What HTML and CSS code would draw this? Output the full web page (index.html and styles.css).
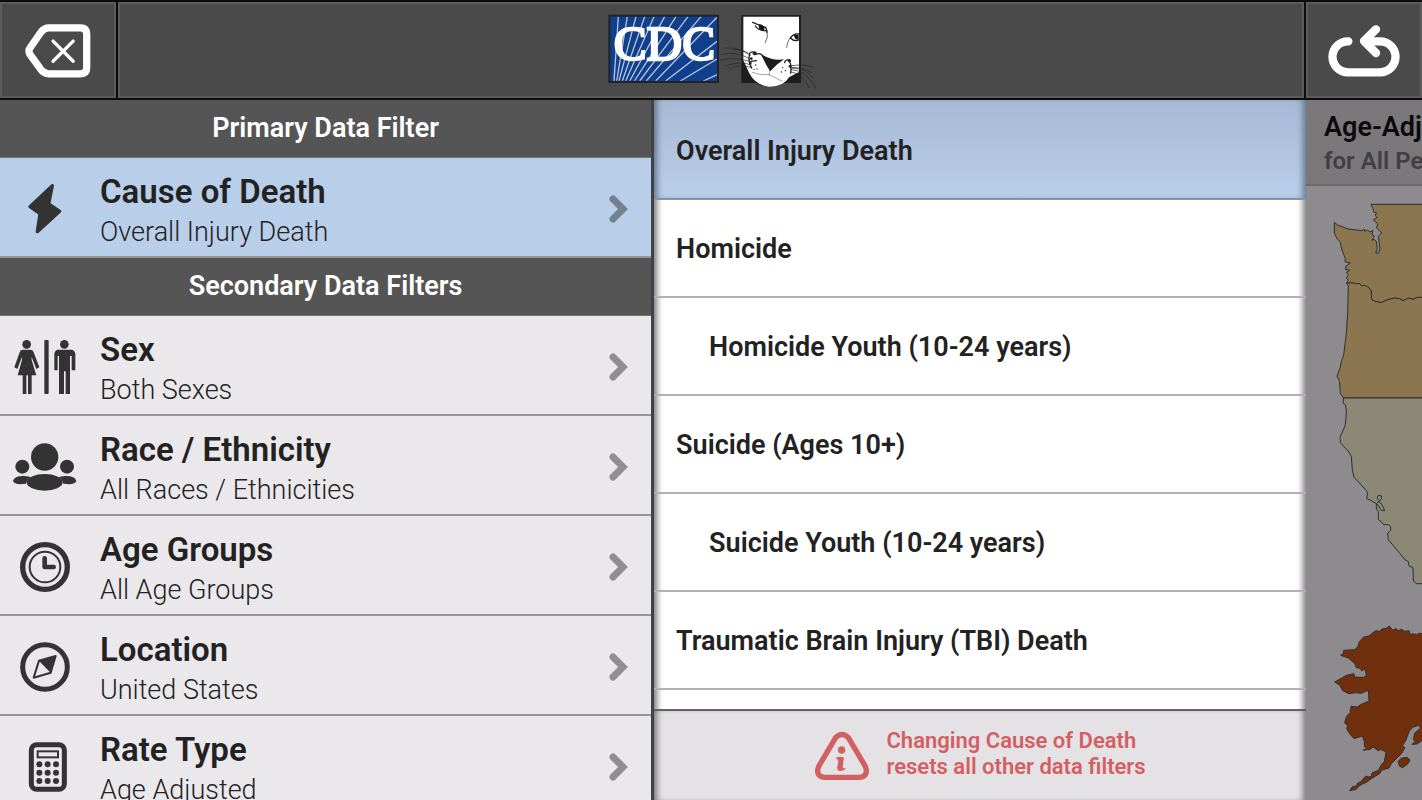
FILE: index.html
```
<!DOCTYPE html>
<html lang="en">
<head>
    <meta charset="UTF-8">
    <meta name="viewport" content="width=device-width, initial-scale=1.0">
    <title>Injury Data - Filters</title>
    <link rel="stylesheet" href="styles.css">
</head>
<body>
    <header class="top-bar">
        <button class="bar-btn" type="button" aria-label="Close filters">
            <svg class="icon-close" viewBox="72 69 200 168" fill="none" stroke="#fff" stroke-linecap="round" stroke-linejoin="round">
                <path d="M144 83H240Q259 83 259 102V203Q259 222 240 222H144Q130 222 120 209L87 163Q81 153 87 144L120 96Q130 83 144 83Z" stroke-width="22"/>
                <path d="M157 123L218 184M218 123L157 184" stroke-width="10"/>
            </svg>
        </button>
        <div class="bar-center">
            <svg class="logos" viewBox="36 39 636 228">
                <clipPath id="cdcBox"><rect x="47" y="50" width="319" height="192"/></clipPath>
                <rect x="40" y="44" width="332" height="205" fill="#222327"/>
                <rect x="46" y="50" width="320" height="193" fill="#103f8c"/>
                <g clip-path="url(#cdcBox)" stroke="#b4c2dc" stroke-width="4">
                    <path d="M57 243L70 50M65 243L97 50M72 243L123 50M82 243L149 50M92 243L177 50M104 243L209 50M118 243L243 50M134 243L279 50M154 243L318 50M182 243L366 52M212 243L366 124M256 243L366 177M325 243L366 224"/>
                </g>
                <text class="cdc-text" x="56" y="180">CDC</text>
                <!-- cougar -->
                <rect x="439" y="45" width="179" height="204" fill="#1e1e1f"/>
                <path d="M445 50H612V216L582 232Q567 260 523 260Q482 255 464 222L445 181Z" fill="#fff"/>
                <path d="M463 222Q470 246 500 257" fill="none" stroke="#222" stroke-width="3"/>
                <g fill="none" stroke="#202020" stroke-linecap="round">
                    <path d="M473 67Q496 77 512 82Q516 91 516 97M481 78Q490 92 513 92" stroke-width="4"/>
                    <path d="M516 95Q521 111 511 128M575 142Q578 120 588 111" stroke-width="2"/>
                    <path d="M611 102Q597 99 586 114Q598 126 611 120" stroke-width="4"/>
                    <path d="M464 160Q458 187 470 204M464 160Q473 150 482 163Q493 158 500 164L526 208M468 184L484 182M582 180Q590 193 587 219M569 188Q572 175 583 182" stroke-width="4"/>
                    <path d="M471 217Q496 227 523 224L562 244M523 211V226" stroke="#777" stroke-width="2"/>
                </g>
                <path d="M493 73Q500 72 509 82Q509 91 503 93Q493 91 491 81ZM597 104H611V119Q598 121 597 104Z" fill="#151515"/>
                <path d="M500 164Q535 184 567 178L547 193Q534 205 526 214Q513 197 500 164Z" fill="#1c1c1c"/>
                <g fill="#222">
                    <circle cx="479" cy="160" r="6"/><circle cx="583" cy="182" r="5"/>
                    <circle cx="469" cy="176" r="4"/><circle cx="466" cy="189" r="4"/>
                    <circle cx="482" cy="195" r="2"/><circle cx="486" cy="207" r="2"/><circle cx="477" cy="208" r="2"/>
                    <circle cx="563" cy="203" r="2"/><circle cx="571" cy="212" r="2"/><circle cx="559" cy="216" r="2"/><circle cx="585" cy="199" r="4"/>
                </g>
                <g fill="none" stroke="#242424" stroke-width="2">
                    <path d="M468 166Q427 141 390 144M465 177Q421 151 378 164M467 185Q422 169 376 181M470 195Q431 181 391 199M468 202Q431 192 402 207M460 160Q433 144 414 149"/>
                    <path d="M588 197Q623 190 655 201M589 205Q630 203 657 237M587 209Q636 210 664 268M588 216Q622 220 643 264M585 202Q625 201 650 219"/>
                </g>
            </svg>
        </div>
        <button class="bar-btn" type="button" aria-label="Reset filters">
            <svg class="icon-reset" viewBox="108 72 228 162" fill="none" stroke="#fff" stroke-width="25" stroke-linecap="round" stroke-linejoin="round">
                <path d="M175 124H174A46 46 0 0 0 174 217H270A46 46 0 0 0 270 124H228"/>
                <path d="M258 88L222 123L258 159"/>
            </svg>
        </button>
    </header>

    <main class="content">
        <nav class="filters">
            <h2>Primary Data Filter</h2>
            <button class="filter-row selected" type="button">
                <span class="row-icon">
                    <svg width="36" height="54" viewBox="80 98 108 158" fill="#333" stroke="#333" stroke-width="10" stroke-linejoin="round">
                        <path d="M156 107L89 170L119 191L111 245L178 184L145 162Z"/>
                    </svg>
                </span>
                <span class="row-text"><strong>Cause of Death</strong><span>Overall Injury Death</span></span>
                <svg class="chevron" viewBox="0 0 20 28"><path d="M4 4L14 14L4 24"/></svg>
            </button>
            <h2>Secondary Data Filters</h2>
            <button class="filter-row" type="button">
                <span class="row-icon">
                    <svg width="62" height="56" viewBox="40 56 186 168" fill="#333">
                        <circle cx="78" cy="72" r="13"/>
                        <path d="M65 88H91Q97 89 99 96L116 141L107 146L93 110V119L107 165H93V221H82V165H77V221H66V165H51L64 119V110L50 146L41 141L57 96Q59 89 65 88Z"/>
                        <rect x="131" y="59" width="13" height="162" rx="3"/>
                        <circle cx="191" cy="72" r="13"/>
                        <path d="M171 88H213Q223 90 224 101V150H213V107H208V221H195V153H190V221H175V107H171V150H161V101Q162 90 171 88Z"/>
                    </svg>
                </span>
                <span class="row-text"><strong>Sex</strong><span>Both Sexes</span></span>
                <svg class="chevron" viewBox="0 0 20 28"><path d="M4 4L14 14L4 24"/></svg>
            </button>
            <button class="filter-row" type="button">
                <span class="row-icon">
                    <svg width="66" height="50" viewBox="35 369 198 150" fill="#333">
                        <circle cx="133" cy="414" r="41"/>
                        <circle cx="66" cy="443" r="21"/><circle cx="200" cy="443" r="21"/>
                        <path d="M38 486Q42 470 72 471Q85 472 92 475Q80 480 77 494Q42 499 38 486ZM228 486Q224 470 194 471Q181 472 174 475Q186 480 189 494Q224 499 228 486Z"/>
                        <ellipse cx="133" cy="490" rx="54" ry="25"/>
                    </svg>
                </span>
                <span class="row-text"><strong>Race / Ethnicity</strong><span>All Races / Ethnicities</span></span>
                <svg class="chevron" viewBox="0 0 20 28"><path d="M4 4L14 14L4 24"/></svg>
            </button>
            <button class="filter-row" type="button">
                <span class="row-icon">
                    <svg width="52" height="52" viewBox="56 70 156 156" fill="none" stroke="#333">
                        <circle cx="134" cy="148" r="67" stroke-width="16"/>
                        <circle cx="134" cy="148" r="46" stroke-width="6"/>
                        <path d="M133 122V148H160" stroke-width="14" stroke-linecap="round" stroke-linejoin="round"/>
                    </svg>
                </span>
                <span class="row-text"><strong>Age Groups</strong><span>All Age Groups</span></span>
                <svg class="chevron" viewBox="0 0 20 28"><path d="M4 4L14 14L4 24"/></svg>
            </button>
            <button class="filter-row" type="button">
                <span class="row-icon">
                    <svg width="52" height="52" viewBox="56 362 156 156" fill="none" stroke="#333">
                        <circle cx="134" cy="440" r="67" stroke-width="15"/>
                        <path d="M166 407L116 421L100 472L151 457Z" stroke-width="6" stroke-linejoin="round"/>
                        <path d="M166 407L116 421L151 457Z" fill="#333"/>
                    </svg>
                </span>
                <span class="row-text"><strong>Location</strong><span>United States</span></span>
                <svg class="chevron" viewBox="0 0 20 28"><path d="M4 4L14 14L4 24"/></svg>
            </button>
            <button class="filter-row" type="button">
                <span class="row-icon icon-calc">
                    <svg width="40" height="52" viewBox="82 662 120 156" fill="#333">
                        <rect x="92" y="673" width="99" height="134" rx="16" fill="none" stroke="#333" stroke-width="15"/>
                        <rect x="111" y="693" width="61" height="18" fill="none" stroke="#333" stroke-width="6"/>
                        <circle cx="116" cy="732" r="9"/><circle cx="141" cy="732" r="9"/><circle cx="166" cy="732" r="9"/>
                        <circle cx="116" cy="757" r="9"/><circle cx="141" cy="757" r="9"/><circle cx="166" cy="757" r="9"/>
                        <circle cx="116" cy="782" r="9"/><circle cx="141" cy="782" r="9"/><circle cx="166" cy="782" r="9"/>
                    </svg>
                </span>
                <span class="row-text"><strong>Rate Type</strong><span>Age Adjusted</span></span>
                <svg class="chevron" viewBox="0 0 20 28"><path d="M4 4L14 14L4 24"/></svg>
            </button>
        </nav>

        <section class="options">
            <div class="option-list">
                <button class="option selected" type="button">Overall Injury Death</button>
                <button class="option" type="button">Homicide</button>
                <button class="option sub" type="button">Homicide Youth (10-24 years)</button>
                <button class="option" type="button">Suicide (Ages 10+)</button>
                <button class="option sub" type="button">Suicide Youth (10-24 years)</button>
                <button class="option" type="button">Traumatic Brain Injury (TBI) Death</button>
            </div>
            <div class="notice">
                <svg width="56" height="50" viewBox="72 153 168 150" fill="none" stroke="#d45f62">
                    <path d="M137 173Q156 154 175 173L226 259Q237 288 209 292H103Q75 288 86 259Z" stroke-width="16" stroke-linejoin="round"/>
                    <circle cx="155" cy="210" r="11" fill="#d45f62" stroke="none"/>
                    <path d="M136 234Q151 227 162 233L158 260Q158 267 169 265Q161 275 148 273Q140 271 142 260L145 244Q145 237 136 234Z" fill="#d45f62" stroke="none"/>
                </svg>
                <p>Changing Cause of Death<br>resets all other data filters</p>
            </div>
        </section>

        <aside class="map-panel">
            <div class="map-title">
                <h3>Age-Adjusted Death Rates</h3>
                <p>for All Persons, All Ages</p>
            </div>
            <svg class="map" viewBox="30 18 348 1842" preserveAspectRatio="xMinYMin slice" stroke="#303030" stroke-width="3" stroke-linejoin="round">
                <!-- Washington -->
                <path fill="#8c7650" d="M400 73H225L231 86L234 97L241 98L238 108L244 112L232 120L245 131L242 144L257 159L247 169L252 208L247 220L239 218L244 207L241 184L234 178L228 181L235 168L228 163L231 151L222 156L214 150L206 154L204 147L198 152L156 147L125 135L115 127V159L122 174L133 187L137 207L148 236L147 245L163 249L150 258L148 268L161 271L152 276L157 284L151 294L157 300L152 309L174 309L180 312L190 310L196 318L206 316L218 322L225 332L227 359L237 364L256 368L275 359L296 354L311 356L321 362L338 354L351 358L365 352L400 353Z"/>
                <!-- Oregon -->
                <path fill="#8c7650" d="M152 309L174 309L180 312L190 310L196 318L206 316L218 322L225 332L227 359L237 364L256 368L275 359L296 354L311 356L321 362L338 354L351 358L365 352L400 353V654H143L133 641L131 605L123 589L132 565L137 541L143 525L151 460L155 400L157 318Z"/>
                <!-- California -->
                <path fill="#8b8975" d="M143 654H400V1211H362L352 1203L351 1163L339 1158L337 1145L328 1140L277 1079L275 1059L284 1051V1040L277 1034H264L247 1018V994L241 987V971L224 961L212 956L215 940L211 931L174 892L169 870L166 829L157 814L133 788L132 772L147 738L150 715L151 692L148 674L141 669Z"/>
                <path fill="#8d8b8d" d="M242 970L250 962L243 956L247 946L257 948L255 959L248 965L258 974L266 992L256 991L248 978Z"/>
                <!-- Alaska -->
                <g fill="#702f0d" transform="translate(0 1260)">
                    <path d="M400 102L368 100L362 104L349 101L343 104L339 92L325 94L317 88L307 92L301 86L289 90L280 78L271 85L258 87L252 94L240 92L231 98L219 108L203 111L190 125L186 139L176 149L143 151L142 161L134 166L157 174L176 190L180 202L194 206L197 213L207 207L211 227L203 232H187L175 231L174 221L151 226L132 237L116 246L131 255L140 272L159 281L180 278L196 280L217 271L219 303L194 314L184 321L165 319L162 338L151 350L146 369L155 376L152 386L161 401L174 416L199 408L205 424V439L212 445L201 451L223 448L231 441L248 453L252 447L270 456L265 485L256 495L247 511L228 519L226 529L217 531L209 528L195 545L184 550L182 558L169 560L161 572L181 568L188 559L201 551L213 546L226 536L252 520L256 511L279 504L286 491L316 461L327 443L319 438L330 420L339 395L350 382L368 376L374 384L356 399L352 419L357 424L348 433L363 432L378 422L400 402Z"/>
                    <path d="M306 485L315 475L333 472L342 480L336 491L320 503L311 499Z"/>
                </g>
            </svg>
        </aside>
    </main>
</body>
</html>
```
FILE: styles.css
```
* {
    box-sizing: border-box;
}
body {
    font-family: Roboto, Arial, sans-serif;
    margin: 0;
    height: 100vh;
    display: flex;
    flex-direction: column;
    overflow: hidden;
    background: #4a4a4a;
    color: #222;
}
button {
    font-family: inherit;
    color: inherit;
    border: none;
    padding: 0;
    margin: 0;
    cursor: pointer;
}
h2, h3, p {
    margin: 0;
}

/* top bar */
.top-bar {
    display: grid;
    grid-template-columns: 116px 1fr 116px;
    gap: 2px;
    flex: none;
    height: 100px;
    padding: 2px 0;
    background: #0c0c0c;
}
.bar-btn, .bar-center {
    display: flex;
    align-items: center;
    justify-content: center;
    padding-top: 2px;
    background: #4a4a4a;
    border: 2px solid #5c5c5c;
}
.bar-center {
    padding-left: 4px;
}
.icon-close {
    width: 66px;
    height: 56px;
}
.icon-reset {
    width: 76px;
    height: 54px;
}
.logos {
    width: 212px;
    height: 76px;
}
.cdc-text {
    font-family: "Liberation Serif", serif;
    font-size: 148px;
    fill: #fff;
    stroke: #fff;
    stroke-width: 7px;
}

/* columns */
.content {
    flex: 1;
    min-height: 0;
    display: grid;
    grid-template-columns: 46% 1fr 116px;
}
.filters {
    overflow: hidden;
    background: #ebe8eb;
    border-right: 3px solid #3f4246;
}
.filters h2 {
    height: 58px;
    border-bottom: 1px solid #777;
    background: #555;
    color: #fff;
    font-size: 27px;
    font-weight: 600;
    line-height: 56px;
    text-align: center;
}
.filter-row {
    display: flex;
    align-items: center;
    width: 100%;
    height: 100px;
    padding-right: 22px;
    background: #ebe8eb;
    border-bottom: 2px solid #979597;
    text-align: left;
}
.filter-row.selected {
    background: #b9cee9;
}
.row-icon {
    display: flex;
    justify-content: center;
    width: 90px;
    padding-top: 4px;
}
.icon-calc {
    padding-left: 6px;
}
.row-text {
    flex: 1;
    padding-left: 10px;
    padding-top: 9px;
    font-size: 27px;
    line-height: 40px;
}
.row-text strong {
    display: block;
    font-size: 33px;
    font-weight: 600;
}
.row-text span {
    display: block;
    font-weight: 300;
}
.chevron {
    width: 20px;
    height: 28px;
    margin-top: 4px;
    fill: none;
    stroke: #8f8e92;
    stroke-width: 7px;
    stroke-linecap: round;
}
.selected .chevron {
    stroke: #75808f;
}

/* option list */
.options {
    display: flex;
    flex-direction: column;
    min-height: 0;
    background: #fff;
    box-shadow: inset 7px 0 6px -4px #777, inset -7px 0 6px -4px #777;
}
.option-list {
    flex: 1;
    min-height: 0;
    overflow: hidden;
}
.option {
    display: block;
    width: 100%;
    height: 98px;
    padding: 4px 22px 0;
    background: transparent;
    border-bottom: 2px solid #b3b1b4;
    font-size: 27px;
    font-weight: 600;
    text-align: left;
}
.option.sub {
    padding-left: 55px;
}
.option.selected {
    height: 100px;
    background: linear-gradient(#a6b9d5, #b9cee9);
    border-color: #8293aa;
    box-shadow: inset 7px 0 6px -4px #64758c, inset -7px 0 6px -4px #64758c;
}
.option + .option {
    padding-top: 2px;
}
.notice {
    display: flex;
    align-items: center;
    justify-content: center;
    gap: 16px;
    height: 91px;
    padding-bottom: 4px;
    border-top: 2px solid #626262;
    background: #e4e2e5;
    box-shadow: inset 7px 0 6px -4px #777, inset -7px 0 6px -4px #777;
    color: #d45f62;
    font-size: 22px;
    font-weight: 600;
    line-height: 26px;
}
.notice svg {
    margin-top: 4px;
}

/* map */
.map-panel {
    display: flex;
    flex-direction: column;
    min-height: 0;
    overflow: hidden;
    background: #8d8b8d;
}
.map-title {
    height: 86px;
    padding: 9px 0 0 18px;
    background: #7a787b;
    border-bottom: 2px solid #6c6a6d;
    white-space: nowrap;
}
.map-title h3 {
    color: #0a0a0a;
    font-size: 27px;
    font-weight: 600;
    line-height: 36px;
}
.map-title p {
    color: #404040;
    font-size: 24px;
    font-weight: 600;
    line-height: 32px;
}
.map {
    flex: 1;
    min-height: 0;
    width: 116px;
}
```
